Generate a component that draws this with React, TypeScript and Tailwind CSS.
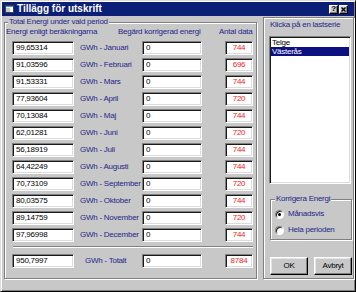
const months: [string, string, string][] = [
  ['99,65314', 'Januari', '744'],
  ['91,03596', 'Februari', '696'],
  ['91,53331', 'Mars', '744'],
  ['77,93604', 'April', '720'],
  ['70,13084', 'Maj', '744'],
  ['62,01281', 'Juni', '720'],
  ['56,18919', 'Juli', '744'],
  ['64,42249', 'Augusti', '744'],
  ['70,73109', 'September', '720'],
  ['80,03575', 'Oktober', '744'],
  ['89,14759', 'November', '720'],
  ['97,96998', 'December', '744'],
]

const sunken =
  'flex h-[14px] items-center border border-t-[#808080] border-l-[#808080] border-b-white border-r-white bg-white shadow-[inset_1px_1px_0_#1a1a1a,inset_-1px_-1px_0_#dcdcdc]'

const raised =
  'flex items-center justify-center border border-t-white border-l-white border-b-black border-r-black bg-[#c8c8c8] shadow-[inset_-1px_-1px_0_#808080,inset_1px_1px_0_#e4e4e4]'

const etched = 'border border-[#808080] shadow-[1px_1px_0_#fff,inset_1px_1px_0_#fff]'

function Row({ value, label, count, total }: { value: string; label: string; count: string; total?: boolean }) {
  return (
    <div className="flex h-[14px] items-center pl-[7px]">
      <div className={`${sunken} w-[62px] pl-[3px] text-black`}>{value}</div>
      <span className={`w-[68px] text-[#262688] ${total ? 'pl-[11px]' : 'pl-[6px]'}`}>GWh - {label}</span>
      <div className={`${sunken} w-[60px] pl-[3px] text-black`}>0</div>
      <div className={`${sunken} ml-[23px] w-[28px] justify-center text-[#f21c1c]`}>{count}</div>
    </div>
  )
}

function Radio({ checked, label }: { checked?: boolean; label: string }) {
  return (
    <div className="flex h-[12px] items-center pl-[4px]">
      <span className="flex h-[9px] w-[9px] items-center justify-center rounded-full border border-t-[#808080] border-l-[#808080] border-b-white border-r-white bg-white shadow-[inset_1px_1px_0_#202020]">
        {checked && <span className="h-[3px] w-[3px] rounded-full bg-black" />}
      </span>
      <span className="ml-[4px] text-[#262688]">{label}</span>
    </div>
  )
}

export default function App() {
  return (
    <div className="h-[292px] w-[356px] border border-t-[#dcdcdc] border-l-[#dcdcdc] border-b-black border-r-black bg-[#c8c8c8] p-[1px] font-['Liberation_Sans',Arial,sans-serif] text-[8px] leading-[10px] tracking-[-0.25px] shadow-[inset_1px_1px_0_#fff,inset_-1px_-1px_0_#808080]">
      {/* title bar */}
      <div className="flex h-[14px] items-center bg-[#0c1f76] pl-[3px] pr-[6px]">
        <svg width="9" height="8" viewBox="0 0 9 8">
          <rect x="0" y="0" width="9" height="8" fill="#ffffff" />
          <rect x="0" y="0" width="9" height="2" fill="#3aa0a0" />
          <rect x="1" y="3" width="4" height="4" fill="#c8c8c8" />
          <rect x="0.5" y="0.5" width="8" height="7" fill="none" stroke="#404040" strokeWidth="1" />
        </svg>
        <span className="ml-[3px] text-[10px] font-bold tracking-normal text-white">Tillägg för utskrift</span>
        <div className="ml-auto flex">
          <div className={`${raised} h-[9px] w-[9px] text-[8px] font-bold leading-none text-black`}>?</div>
          <div className={`${raised} ml-[1px] h-[9px] w-[9px]`}>
            <svg width="5" height="5" viewBox="0 0 5 5">
              <path d="M0.5 0.5 L4.5 4.5 M4.5 0.5 L0.5 4.5" stroke="#000" strokeWidth="1.3" />
            </svg>
          </div>
        </div>
      </div>

      <div className="flex pt-[1px]">
        {/* left group */}
        <fieldset className={`${etched} ml-[2px] w-[253px] px-0 pb-[6px]`}>
          <legend className="ml-[3px] bg-[#c8c8c8] px-[1px] text-[#262688]">Total Energi under vald period</legend>
          <div className="flex h-[10px] items-center pl-[1px] pt-0 text-[#262688]">
            <span className="w-[112px]">Energi enligt beräkningarna</span>
            <span className="w-[101px]">Begärd korrigerad energi</span>
            <span>Antal data</span>
          </div>
          <div className="mt-[4px] flex flex-col gap-[3px]">
            {months.map(([v, m, n]) => (
              <Row key={m} value={v} label={m} count={n} />
            ))}
          </div>
          <div className="ml-[8px] mt-[4px] h-[2px] w-[240px] border-t border-t-[#808080] border-b border-b-white" />
          <div className="mt-[6px]">
            <Row value="950,7997" label="Totalt" count="8784" total />
          </div>
        </fieldset>

        {/* right panel */}
        <div className={`${etched} ml-[6px] flex w-[91px] flex-col pb-[3px] pt-[2px]`}>
          <span className="ml-[6px] h-[10px] text-[#262688]">Klicka på en lastserie</span>
          <div className="ml-[5px] mt-[6px] h-[148px] w-[82px] border border-t-[#808080] border-l-[#808080] border-b-white border-r-white bg-white pt-[1px] shadow-[inset_1px_1px_0_#1a1a1a,inset_-1px_-1px_0_#dcdcdc]">
            <div className="h-[9px] pl-[2px] leading-[9px] text-black">Telge</div>
            <div className="mx-[1px] h-[9px] bg-[#0c1080] pl-[1px] leading-[9px] text-white">Västerås</div>
          </div>
          <fieldset className={`${etched} ml-[6px] mt-[10px] w-[82px] pb-[3px]`}>
            <legend className="ml-[4px] bg-[#c8c8c8] px-[1px] text-[#262688]">Korrigera Energi</legend>
            <div className="flex flex-col gap-[4px] pt-[4px]">
              <Radio checked label="Månadsvis" />
              <Radio label="Hela perioden" />
            </div>
          </fieldset>
          <div className="ml-[6px] mt-[17px] flex gap-[6px]">
            <div className={`${raised} h-[18px] w-[38px] text-black`}>OK</div>
            <div className={`${raised} h-[18px] w-[38px] text-black`}>Avbryt</div>
          </div>
        </div>
      </div>
    </div>
  )
}
